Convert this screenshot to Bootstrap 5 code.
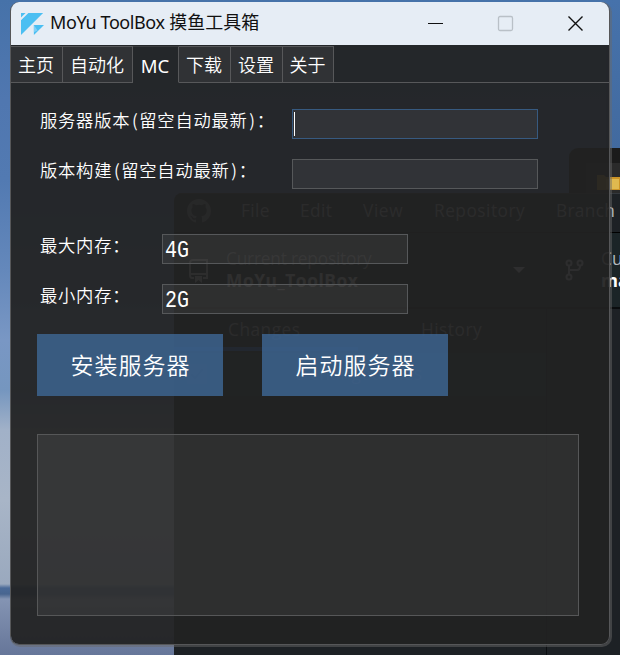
<!DOCTYPE html>
<html lang="zh-CN">
<head>
<meta charset="utf-8">
<meta name="viewport" content="width=device-width, initial-scale=1">
<title>MoYu ToolBox 摸鱼工具箱</title>
<link href="https://cdn.jsdelivr.net/npm/bootstrap@5.3.0/dist/css/bootstrap.min.css" rel="stylesheet">
<style>
html,body{height:655px;overflow:hidden}
body{font-family:"Noto Sans","Noto Sans CJK SC",sans-serif;background:linear-gradient(180deg,#4672a9 0,#5077b0 100px,#527ab2 180px,#6488bb 270px,#7997c4 340px,#7596bf 390px,#a1b1c8 430px,#a8b5c7 500px,#9aa9be 584px,#4a6a98 588px,#48658f 594px,#8494b3 599px,#667699 655px)}
.desk{width:620px;height:655px}
/* windows lying on the desktop */
.sky{left:606px;top:0;width:14px;height:150px;background:linear-gradient(#4672ab,#426a9f)}
.explorer{left:569px;top:148px;width:70px;height:60px;background:#1b1b1b;border-radius:9px 0 0 0}
.explorer .strip{left:17px;top:15px;width:60px;height:45px;background:#2a2a2a}
.explorer svg{left:28px;top:27px}
.git{left:174px;top:193px;width:460px;height:480px;background:#1d2125;border-radius:8px 0 0 0;color:#b4b9bf;font-family:"Open Sans","Noto Sans",sans-serif;font-size:17.3px;line-height:20px;overflow:hidden}
.git .edge{left:0;top:0;width:100%;height:1px;background:#34383d}
.git .toolrow{left:0;top:39px;width:460px;height:77px;background:#1b2427;border-top:1px solid #000;border-bottom:2px solid #0a0c0e}
.git .pane{left:0;top:160px;width:372px;height:43px;background:#1d3233}
.git .vline{left:372px;top:116px;width:1px;height:400px;background:#0b0d10}
.git .bar{left:0;top:154px;width:184px;height:4px;background:#2878ff}
.git span,.git b{white-space:nowrap}
/* main window */
.appwin{left:10px;top:2px;width:600px;height:643px;border-radius:9px;box-shadow:1px 1px 0 1px rgba(105,105,105,.48)}
.appbody{width:600px;height:643px;border-radius:9px;overflow:hidden;border:solid #565759;border-width:0 1px 1px;background:rgba(34,34,34,.94);background-clip:padding-box}
.titlebar{height:43px;margin:0 -1px;background:#e6edf5;color:#111;font-size:18px}
.titlebar .cap{margin-left:-6px;line-height:24px;padding-bottom:3px}
.titlebar .latin{letter-spacing:-.42px}
.titlebar .logo{margin-left:8px;padding-left:3px}
.titlebar .ctrls{margin-right:26px;gap:53px}
.tabs{height:38px;padding-top:1px;border-bottom:0;flex-wrap:nowrap}
.tabs .nav-link{height:37px;border:1px solid #57585a;border-left:0;border-radius:0;margin:0;padding:0 1px 0 0;color:#fff;background:rgba(255,255,255,.055);font-size:18px;font-weight:350;line-height:37px;text-align:center}
.tabs .nav-link.active{background:transparent;color:#fff;font-size:18.5px;font-weight:400;border-color:transparent #57585a transparent transparent;border-top-color:#3a3c3e}
.w52{width:52px}.w70{width:70px}.w46{width:46px}.w51{width:51px}
.tabs .rest{border-bottom:1px solid #57585a}
.pane-body{padding:26px 30px 0 26px}
.frow{height:30px;margin-bottom:20px}
.frow label{padding-left:3px;font-family:"Noto Sans CJK SC",sans-serif;font-size:17.3px;font-weight:350;letter-spacing:.78px;color:#fff;line-height:22px;white-space:nowrap}
.frow label i{display:inline-block;width:9px;font-style:normal;text-align:center;letter-spacing:0}
.l1{width:255px}.l2{width:125px}
.field{width:246px;height:30px;border:1px solid #56585a;border-radius:0;background:rgba(255,255,255,.06)!important;color:#fff!important;padding:2px;box-shadow:none!important}
.field.on{border-color:#375a80}
.field .val{display:inline-block;font-family:"Liberation Mono",monospace;font-size:20px;line-height:28px;transform:scaleY(1.24);transform-origin:50% 60%}
.caret{width:1px;height:24px;background:#fff;margin:2px 0 0 1px}
.action{width:186px;height:62px;border:0;border-radius:0;background:rgba(61,101,146,.83)!important;color:#fff!important;font-family:"Noto Sans CJK SC",sans-serif;font-size:23px;font-weight:350;letter-spacing:1px;padding:0 0 1px 1px}
.log{width:542px;height:182px;margin-top:38px;border:1px solid #565758;border-radius:0;background:rgba(255,255,255,.06)!important;resize:none;box-shadow:none!important}
</style>
<script src="https://cdn.jsdelivr.net/npm/bootstrap@5.3.0/dist/js/bootstrap.bundle.min.js"></script>
</head>
<body>
<div class="desk position-relative overflow-hidden">
  <div class="sky position-absolute"></div>
  <div class="explorer position-absolute"><div class="strip position-absolute"></div>
    <svg class="position-absolute" width="24" height="18"><path d="M0 0H7L9 2H24V15H0Z" fill="#cc9427"/><path d="M9 4H22V14H9Z" fill="#e0b94f"/></svg>
  </div>
  <div class="git position-absolute" aria-hidden="true">
    <div class="edge position-absolute"></div>
    <div class="toolrow position-absolute"></div>
    <div class="pane position-absolute"></div>
    <div class="vline position-absolute"></div>
    <div class="bar position-absolute"></div>
    <svg class="position-absolute" style="left:13px;top:6px" width="24" height="24" viewBox="0 0 16 16" fill="#7b8086"><path d="M8 0C3.58 0 0 3.58 0 8c0 3.54 2.29 6.53 5.47 7.59.4.07.55-.17.55-.38v-1.49c-2.01.37-2.53-.49-2.69-.94-.09-.23-.48-.94-.82-1.13-.28-.15-.68-.52-.01-.53.63-.01 1.08.58 1.23.82.72 1.21 1.87.87 2.33.66.07-.52.28-.87.51-1.07-1.78-.2-3.64-.89-3.64-3.95 0-.87.31-1.59.82-2.15-.08-.2-.36-1.02.08-2.12 0 0 .67-.21 2.2.82a7.600 7.600 0 0 1 4 0c1.530-1.040 2.200-.82 2.200-.82.44 1.100.16 1.920.08 2.120.51.56.82 1.270.82 2.150 0 3.070-1.870 3.750-3.650 3.950.29.25.54.73.54 1.480v2.190c0 .21.15.46.55.38A8 8 0 0 0 16 8c0-4.420-3.580-8-8-8Z"/></svg>
    <span class="position-absolute" style="left:67px;top:8px;letter-spacing:.4px">File</span>
    <span class="position-absolute" style="left:126px;top:8px;letter-spacing:.4px">Edit</span>
    <span class="position-absolute" style="left:189px;top:8px;letter-spacing:.6px">View</span>
    <span class="position-absolute" style="left:260px;top:8px;letter-spacing:.5px">Repository</span>
    <span class="position-absolute" style="left:382px;top:8px;letter-spacing:.3px">Branch</span>
    <svg class="position-absolute" style="left:15px;top:66px" width="20" height="25" fill="none" stroke="#d0d5da" stroke-width="2"><path d="M5 19H3Q1 19 1 16V4Q1 1 4 1H18V19H14M1 15H18"/><path d="M6 17H13V24L9.500 21L6 24Z" fill="#d0d5da" stroke="none"/></svg>
    <span class="position-absolute" style="left:52px;top:56px;letter-spacing:-.2px">Current repository</span>
    <b class="position-absolute text-white" style="left:52px;top:78px;letter-spacing:.6px">MoYu_ToolBox</b>
    <svg class="position-absolute" style="left:339px;top:74px" width="12" height="7"><path d="M0 0H12L6 6Z" fill="#e8ecf0"/></svg>
    <svg class="position-absolute" style="left:391px;top:66px" width="20" height="22" fill="none" stroke="#d8dde2" stroke-width="2"><circle cx="4" cy="4" r="2.500"/><circle cx="15" cy="4" r="2.500"/><circle cx="4" cy="18" r="2.500"/><path d="M4 7V15M4 11H12Q15 11 15 7"/></svg>
    <span class="position-absolute" style="left:427px;top:56px">Cu</span>
    <b class="position-absolute text-white" style="left:427px;top:78px">ma</b>
    <span class="position-absolute" style="left:54px;top:127px;letter-spacing:.5px">Changes</span>
    <span class="position-absolute" style="left:247px;top:127px;letter-spacing:.5px">History</span>
    <svg class="position-absolute" style="left:13px;top:171px" width="20" height="20"><rect width="20" height="20" rx="2" fill="#596d80"/><path d="M4 10L8 14L16 5" fill="none" stroke="#111" stroke-width="2"/></svg>
    <span class="position-absolute text-white" style="left:121px;top:171px;letter-spacing:.5px">0 changed files</span>
  </div>

  <main class="appwin position-absolute">
    <div class="appbody">
      <header class="titlebar d-flex align-items-center">
        <svg class="logo flex-shrink-0" width="38" height="26" viewBox="0 0 38 26"><path d="M0 6V1H5ZM8 1H24L0 25V9Z" fill="#4bbff2"/><path d="M14 14H25L14 25Z" fill="#4bbff2"/><path d="M14 22V14L18 20Z" fill="#80d0f7"/></svg>
        <span class="cap"><span class="latin">MoYu ToolBox</span> 摸鱼工具箱</span>
        <div class="ctrls d-flex align-items-center ms-auto">
          <svg width="17" height="17" stroke="#111"><path d="M1 8.500H16"/></svg>
          <svg width="17" height="17" fill="none" stroke="#b9c0c7" stroke-width="1.300"><rect x="1.500" y="1.500" width="14" height="14" rx="1.500"/></svg>
          <svg width="17" height="17" stroke="#111" stroke-width="1.400"><path d="M1.500 1.500L15.500 15.500M15.500 1.500L1.500 15.500"/></svg>
        </div>
      </header>
      <nav class="nav nav-tabs tabs">
        <a class="nav-link w52">主页</a><a class="nav-link w70">自动化</a><a class="nav-link active w46">MC</a><a class="nav-link w52">下载</a><a class="nav-link w52">设置</a><a class="nav-link w51">关于</a><div class="rest flex-grow-1"></div>
      </nav>
      <div class="pane-body">
        <div class="frow d-flex"><label class="l1">服务器版本<i>(</i>留空自动最新<i>)</i>：</label><div class="field on d-flex p-0"><div class="caret"></div></div></div>
        <div class="frow d-flex"><label class="l1">版本构建<i>(</i>留空自动最新<i>)</i>：</label><div class="form-control field"></div></div>
        <div class="frow d-flex" style="margin-top:45px"><label class="l2">最大内存：</label><div class="form-control field"><span class="val">4G</span></div></div>
        <div class="frow d-flex"><label class="l2">最小内存：</label><div class="form-control field"><span class="val">2G</span></div></div>
        <div class="d-flex" style="gap:39px"><button class="btn btn-primary action">安装服务器</button><button class="btn btn-primary action">启动服务器</button></div>
        <textarea class="form-control log" readonly aria-label="输出"></textarea>
      </div>
    </div>
  </main>
</div>
</body>
</html>
